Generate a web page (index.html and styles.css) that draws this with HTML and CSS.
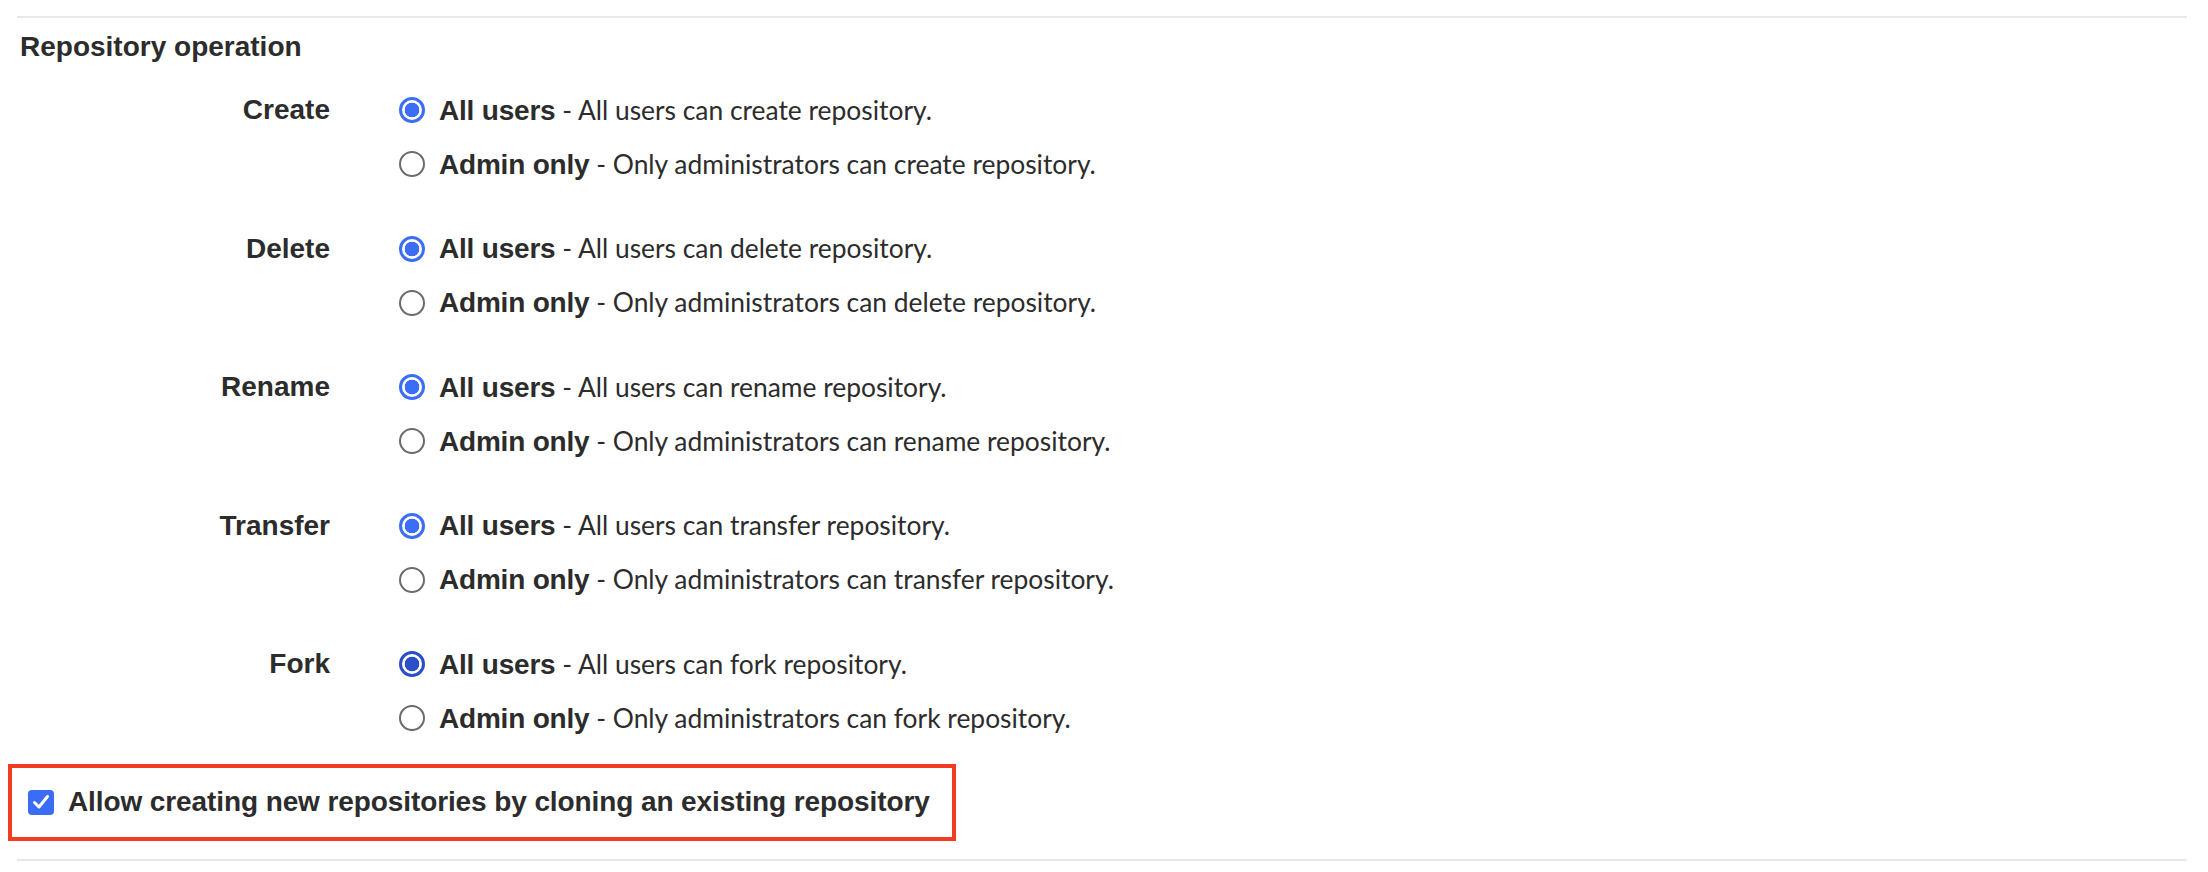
FILE: index.html
```html
<!DOCTYPE html>
<html lang="en">
<head>
    <meta charset="UTF-8">
    <meta name="viewport" content="width=device-width, initial-scale=1.0">
    <title>Repository operation</title>
    <link rel="stylesheet" href="styles.css">
</head>
<body>
    <div class="page">
        <div class="section">
            <h3 class="section-title">Repository operation</h3>

            <div class="group">
                <div class="group-label">Create</div>
                <div class="options">
                    <label class="option"><input type="radio" name="create" checked><span><b>All users</b><span class="desc"> - All users can create repository.</span></span></label>
                    <label class="option"><input type="radio" name="create"><span><b>Admin only</b><span class="desc"> - Only administrators can create repository.</span></span></label>
                </div>
            </div>

            <div class="group">
                <div class="group-label">Delete</div>
                <div class="options">
                    <label class="option"><input type="radio" name="delete" checked><span><b>All users</b><span class="desc"> - All users can delete repository.</span></span></label>
                    <label class="option"><input type="radio" name="delete"><span><b>Admin only</b><span class="desc"> - Only administrators can delete repository.</span></span></label>
                </div>
            </div>

            <div class="group">
                <div class="group-label">Rename</div>
                <div class="options">
                    <label class="option"><input type="radio" name="rename" checked><span><b>All users</b><span class="desc"> - All users can rename repository.</span></span></label>
                    <label class="option"><input type="radio" name="rename"><span><b>Admin only</b><span class="desc"> - Only administrators can rename repository.</span></span></label>
                </div>
            </div>

            <div class="group">
                <div class="group-label">Transfer</div>
                <div class="options">
                    <label class="option"><input type="radio" name="transfer" checked><span><b>All users</b><span class="desc"> - All users can transfer repository.</span></span></label>
                    <label class="option"><input type="radio" name="transfer"><span><b>Admin only</b><span class="desc"> - Only administrators can transfer repository.</span></span></label>
                </div>
            </div>

            <div class="group">
                <div class="group-label">Fork</div>
                <div class="options">
                    <label class="option"><input type="radio" name="fork" class="focused" checked><span><b>All users</b><span class="desc"> - All users can fork repository.</span></span></label>
                    <label class="option"><input type="radio" name="fork"><span><b>Admin only</b><span class="desc"> - Only administrators can fork repository.</span></span></label>
                </div>
            </div>

            <!-- highlighted setting -->
            <div class="highlight">
                <label class="check">
                    <span class="check-box">
                        <svg width="18" height="16" viewBox="0 0 18 16"><path d="M2.5 8.5 L7 13 L15.5 2.5" fill="none" stroke="#fff" stroke-width="3" stroke-linecap="round" stroke-linejoin="round"/></svg>
                    </span>
                    Allow creating new repositories by cloning an existing repository
                </label>
            </div>
        </div>
    </div>
</body>
</html>
```

FILE: styles.css
```css
body {
    margin: 0;
    background: #fff;
    color: #2c2c2c;
    font-family: "Liberation Sans", Arial, sans-serif;
}

.page {
    padding: 16px 21px 0 17px;
}

.section {
    border-top: 2px solid #e8e8e8;
    border-bottom: 2px solid #e8e8e8;
    padding-bottom: 18px;
}

.section-title {
    margin: 11px 0 18px 3px;
    font-size: 28px;
    line-height: 36px;
    font-weight: bold;
}

/* One row per operation */
.group {
    display: flex;
    margin-bottom: 30.5px;
}

.group-label {
    width: 313px;
    height: 54px;
    line-height: 54px;
    text-align: right;
    font-size: 28px;
    font-weight: bold;
    flex-shrink: 0;
}

.options {
    display: flex;
    flex-direction: column;
    padding-left: 69px;
}

.option {
    display: flex;
    align-items: center;
    height: 54px;
    font-size: 28px;
    white-space: pre;
}

.option b {
    font-weight: bold;
    letter-spacing: -0.2px;
}

.desc {
    font-family: Lato, "Liberation Sans", sans-serif;
    font-size: 26.4px;
}

/* Radio buttons */
.option input {
    appearance: none;
    width: 26px;
    height: 26px;
    margin: 0 14px 0 0;
    border: 2px solid #6b6b6b;
    border-radius: 50%;
    background: #fff;
    flex-shrink: 0;
}

.option input:checked {
    border: 3px solid #3c6df6;
    background: radial-gradient(circle, #3c6df6 0 7px, #fff 7.6px);
}

.option input.focused:checked {
    border-color: #2b4fc6;
    background: radial-gradient(circle, #2b4fc6 0 7px, #fff 7.6px);
}

/* Red annotation box */
.highlight {
    display: inline-flex;
    align-items: center;
    height: 69px;
    margin: -12px 0 0 -9.5px;
    padding: 0 22px 0 16.5px;
    border: 4px solid #f13b23;
}

.check {
    display: flex;
    align-items: center;
    font-size: 28px;
    font-weight: bold;
    letter-spacing: -0.1px;
}

.check-box {
    display: flex;
    justify-content: center;
    align-items: center;
    width: 26px;
    height: 25px;
    margin-right: 14px;
    border-radius: 4px;
    background: #3a6cf4;
}
```
